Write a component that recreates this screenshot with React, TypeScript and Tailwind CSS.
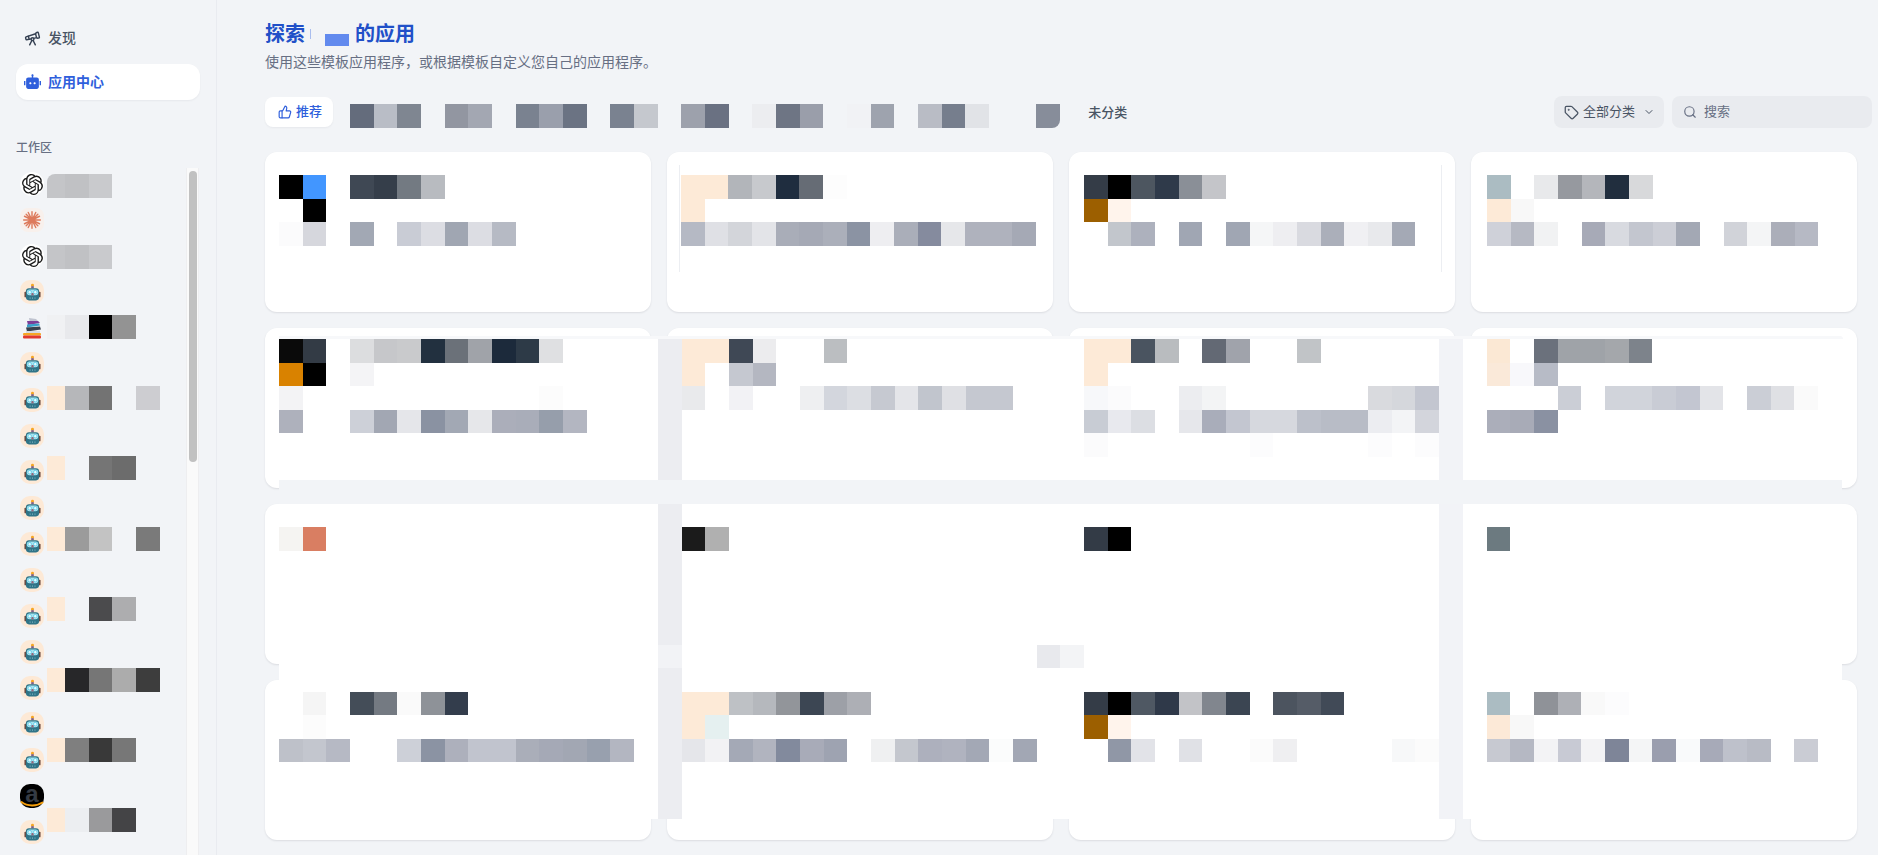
import { ChevronDown, Search, Tag, Telescope, ThumbsUp } from 'lucide-react';
import { RiRobot2Fill } from 'react-icons/ri';
import { SiOpenai } from 'react-icons/si';

const _ = '';
const P = 'bg-[#fdead7]';

// one row of the mosaic that hides names in the screenshot
function Pixels({ cells, className = '' }: { cells: string[]; className?: string }) {
  return (
    <div className={`flex h-[23.5px] shrink-0 ${className}`}>
      {cells.map((c, i) => (
        <div key={i} className={`h-full w-[23.68px] shrink-0 ${c}`} />
      ))}
    </div>
  );
}

function PixelRows({ rows }: { rows: string[][] }) {
  return (
    <>
      {rows.map((r, i) => (
        <Pixels key={i} cells={r} />
      ))}
    </>
  );
}

function RobotIcon() {
  return (
    <span className="flex h-6 w-6 shrink-0 items-center justify-center rounded-[10px] bg-[#fde9d6]">
      <svg width="21" height="21" viewBox="0 0 24 24">
        <circle cx="12" cy="3.6" r="1.7" fill="#f6a623" />
        <rect x="10.5" y="4.8" width="3" height="2.4" fill="#7d5f86" />
        <rect x="2.8" y="11" width="2.4" height="6.5" rx="1" fill="#6d4a3f" />
        <rect x="18.8" y="11" width="2.4" height="6.5" rx="1" fill="#6d4a3f" />
        <rect x="4.5" y="7" width="15" height="14" rx="3.5" fill="#2f7487" />
        <rect x="5.5" y="8.5" width="13" height="6.5" rx="3" fill="#a9e4f0" />
        <circle cx="8.8" cy="11.6" r="2" fill="#e4fafe" stroke="#47c4e4" strokeWidth="0.8" />
        <circle cx="15.2" cy="11.6" r="2" fill="#e4fafe" stroke="#47c4e4" strokeWidth="0.8" />
        <rect x="10.6" y="12.5" width="2.8" height="3" rx="1" fill="#8d6a7e" />
        <path d="M8.8 18.4h.9m1.9 0h.9m1.9 0h.9" stroke="#b9e2ea" strokeWidth="1" />
      </svg>
    </span>
  );
}

function OpenaiIcon() {
  return (
    <span className="flex h-6 w-6 shrink-0 items-center justify-center rounded-full bg-white">
      <SiOpenai size={21} className="text-[#1a1a1a]" />
    </span>
  );
}

function ClaudeIcon() {
  return (
    <span className="flex h-6 w-6 shrink-0 items-center justify-center rounded-lg bg-[#f8f0ec]">
      <svg width="20" height="20" viewBox="0 0 24 24" stroke="#dd7a5c" strokeWidth="1.7" strokeLinecap="round">
        <path d="M12 2v20M2 12h20M5 5l14 14M19 5L5 19M7.5 3l9 18M16.5 3l-9 18M3 7.5l18 9M21 7.5l-18 9" />
      </svg>
    </span>
  );
}

function BooksIcon() {
  return (
    <span className="flex h-6 w-6 shrink-0 items-center justify-center">
      <svg width="20" height="24" viewBox="0 0 20 24">
        <path d="M7 2l7 1 3 3-9 1z" fill="#bfc3cf" />
        <path d="M5 5l11 0 2 2-12 2z" fill="#7b3f98" />
        <path d="M5 8.5l12-1 1 2-13 2z" fill="#3aa0c9" />
        <path d="M4 11.5l14-1 1 3-14 2z" fill="#39424e" />
        <rect x="4" y="15" width="14" height="2" fill="#d7dbe2" />
        <rect x="1" y="17" width="18" height="2.5" rx="1" fill="#f6a623" />
        <rect x="1" y="19.5" width="18" height="3" rx="1" fill="#e0382e" />
      </svg>
    </span>
  );
}

function AmazonIcon() {
  return (
    <span className="relative flex h-6 w-6 shrink-0 items-start justify-center rounded-[10px] bg-black font-['Liberation_Sans',sans-serif] text-[24px] leading-[20px] font-bold text-[#353b44]">
      a
      <svg className="absolute bottom-0 left-0" width="24" height="8" viewBox="0 0 24 8">
        <path d="M1.5 2c6 4.5 15 4.5 21 .5" fill="none" stroke="#f59e0b" strokeWidth="2" strokeLinecap="round" />
      </svg>
    </span>
  );
}

const sideRows: { icon: React.ReactNode; cells?: string[]; shift?: string }[] = [
  { icon: <OpenaiIcon />, cells: ['bg-[#c4c5c8] rounded-tl-lg', 'bg-[#c0c1c4]', 'bg-[#c9cacd]'], shift: 'translate-y-[2px]' },
  { icon: <ClaudeIcon /> },
  { icon: <OpenaiIcon />, cells: ['bg-[#c4c5c8]', 'bg-[#c0c1c4]', 'bg-[#c9cacd]'], shift: 'translate-y-[1px]' },
  { icon: <RobotIcon /> },
  { icon: <BooksIcon />, cells: ['bg-[#f0f1f3]', 'bg-[#e8e9ec]', 'bg-[#000000]', 'bg-[#939393]'], shift: '-translate-y-[1px]' },
  { icon: <RobotIcon /> },
  { icon: <RobotIcon />, cells: [P, 'bg-[#b6b7ba]', 'bg-[#737373]', _, 'bg-[#cdcdd1]'], shift: '-translate-y-[2px]' },
  { icon: <RobotIcon /> },
  { icon: <RobotIcon />, cells: [P, _, 'bg-[#757575]', 'bg-[#6c6c6c]'], shift: '-translate-y-[4px]' },
  { icon: <RobotIcon /> },
  { icon: <RobotIcon />, cells: [P, 'bg-[#9b9b9b]', 'bg-[#c3c3c3]', _, 'bg-[#7a7a7a]'], shift: '-translate-y-[5px]' },
  { icon: <RobotIcon /> },
  { icon: <RobotIcon />, cells: [P, _, 'bg-[#4b4b4d]', 'bg-[#adadaf]'], shift: '-translate-y-[7px]' },
  { icon: <RobotIcon /> },
  { icon: <RobotIcon />, cells: [P, 'bg-[#272729]', 'bg-[#767676]', 'bg-[#acacac]', 'bg-[#3d3d3d]'], shift: '-translate-y-[8px]' },
  { icon: <RobotIcon /> },
  { icon: <RobotIcon />, cells: [P, 'bg-[#7f7f7f]', 'bg-[#393939]', 'bg-[#777777]'], shift: '-translate-y-[10px]' },
  { icon: <AmazonIcon /> },
  { icon: <RobotIcon />, cells: [P, 'bg-[#eceef1]', 'bg-[#9a9a9c]', 'bg-[#444446]'], shift: '-translate-y-[12px]' },
];

function Sidebar() {
  return (
    <aside className="flex h-full w-[217px] shrink-0 flex-col border-r border-[#e9ebf0] pt-5 pl-4">
      <div className="flex h-9 w-[184px] items-center gap-[7px] px-2 text-sm font-medium text-[#495464]">
        <Telescope size={17} className="text-[#354052]" />
        发现
      </div>
      <div className="mt-2 flex h-9 w-[184px] items-center gap-[7px] rounded-xl bg-white px-2 text-sm font-semibold text-[#2f5fdc] shadow-[0_1px_2px_rgba(16,24,40,0.05)]">
        <RiRobot2Fill size={17} className="text-[#2f5fdc]" />
        应用中心
      </div>
      <div className="mt-10 text-xs leading-4 font-medium text-[#676f83]">工作区</div>
      <div className="mt-3 flex min-h-0 flex-1">
        <div className="-mt-[2px] w-[170px] overflow-hidden pl-1">
          {sideRows.map((row, i) => (
            <div key={i} className="flex h-9 shrink-0 items-center gap-[3px]">
              {row.icon}
              {row.cells && (
                <div className={`flex h-[23.5px] ${row.shift}`}>
                  {row.cells.map((c, j) => (
                    <div key={j} className={`h-full ${j === 0 ? 'w-[18px]' : 'w-[23.68px]'} ${c}`} />
                  ))}
                </div>
              )}
            </div>
          ))}
        </div>
        <div className="w-[13px] shrink-0 border-x border-[#eeeef0] bg-[#fafafa] px-[2px] pt-[3px]">
          <div className="h-[291px] w-2 rounded-full bg-[#c1c1c1]" />
        </div>
      </div>
    </aside>
  );
}

function Toolbar() {
  return (
    <div className="mt-6 flex h-8 w-[1607px] items-start">
      <button className="mt-px flex h-[30px] w-[68px] items-center justify-center gap-1 rounded-lg bg-white pl-[2px] text-[13px] font-medium text-[#2f5fdc] shadow-[0_1px_2px_rgba(16,24,40,0.05)]">
        <ThumbsUp size={14} />
        推荐
      </button>
      <Pixels
        className="mt-[8px] ml-[17px]"
        cells={[
          'bg-[#646c7c]', 'bg-[#b9bdc6]', 'bg-[#7f8691]', _,
          'bg-[#9296a1]', 'bg-[#a3a7b2]', _,
          'bg-[#7a8290]', 'bg-[#9a9fac]', 'bg-[#6b7383]', _,
          'bg-[#7a8290]', 'bg-[#c5c8ce]', _,
          'bg-[#9da1ac]', 'bg-[#6a7182]', _,
          'bg-[#ecedf0]', 'bg-[#6e7584]', 'bg-[#9a9eaa]', _,
          'bg-[#f1f2f5]', 'bg-[#9ea3ae]', _,
          'bg-[#b9bcc5]', 'bg-[#767e8d]', 'bg-[#e1e3e7]', _, _,
          'bg-[#878d9a] rounded-br-lg',
        ]}
      />
      <span className="mt-[6px] ml-[28px] text-[13px] leading-5 font-medium text-[#495464]">未分类</span>
      <div className="ml-auto flex gap-2">
        <div className="flex h-8 w-[110px] items-center rounded-lg bg-[#e9ebef] pl-[10px] text-[13px] text-[#495464]">
          <Tag size={15} className="mr-[4px]" />
          全部分类
          <ChevronDown size={12} className="ml-2" />
        </div>
        <div className="flex h-8 w-[200px] items-center rounded-lg bg-[#e9ebef] pl-[11px] text-[13px] text-[#676f83]">
          <Search size={14} className="mr-[7px]" />
          搜索
        </div>
      </div>
    </div>
  );
}

const firstRow: { pad: string; line?: string; rows: string[][] }[] = [
  {
    pad: 'pl-[14px]',
    rows: [
      ['bg-[#000000]', 'bg-[#4296ff]', _, 'bg-[#3f4854]', 'bg-[#353e4a]', 'bg-[#737a82]', 'bg-[#b8bbc0]'],
      [_, 'bg-[#000000]'],
      ['bg-[#fbfbfc]', 'bg-[#d6d7dd]', _, 'bg-[#a2a8b4]', _, 'bg-[#c9ccd5]', 'bg-[#dcdde3]', 'bg-[#a0a6b2]', 'bg-[#dcdde3]', 'bg-[#b6bac4]'],
    ],
  },
  {
    pad: 'pl-[14px]',
    line: 'left-[12px]',
    rows: [
      [P, P, 'bg-[#b2b5ba]', 'bg-[#c7c9cd]', 'bg-[#1f2d3f]', 'bg-[#666c75]', 'bg-[#fdfdfd]'],
      [P],
      ['bg-[#b5b9c4]', 'bg-[#dfe0e5]', 'bg-[#d3d5da]', 'bg-[#e3e4e8]', 'bg-[#a9adb8]', 'bg-[#a5a9b5]', 'bg-[#abafba]', 'bg-[#8b93a3]', 'bg-[#eeeef1]', 'bg-[#aaaeb9]', 'bg-[#858b9e]', 'bg-[#e6e7ea]', 'bg-[#afb2bd]', 'bg-[#afb2bd]', 'bg-[#a5a9b5]'],
    ],
  },
  {
    pad: 'pl-[15px]',
    line: 'right-[13px]',
    rows: [
      ['bg-[#343c47]', 'bg-[#000000]', 'bg-[#4d5660]', 'bg-[#2f3a4a]', 'bg-[#8a8f97]', 'bg-[#c4c5c9]'],
      ['bg-[#9c5f00]', 'bg-[#fff4ec]'],
      [_, 'bg-[#c2c6cc]', 'bg-[#adb1bd]', _, 'bg-[#a0a6b3]', _, 'bg-[#a0a6b3]', 'bg-[#f5f6f7]', 'bg-[#eeeef1]', 'bg-[#d9dae0]', 'bg-[#abafba]', 'bg-[#f0f0f3]', 'bg-[#e8e9ec]', 'bg-[#a4a9b5]'],
    ],
  },
  {
    pad: 'pl-[16px]',
    rows: [
      ['bg-[#abbcc2]', _, 'bg-[#e8e9eb]', 'bg-[#96999f]', 'bg-[#b4b6bb]', 'bg-[#212e3e]', 'bg-[#d8d9db]'],
      [P, 'bg-[#f8f8f8]'],
      ['bg-[#cfd1d9]', 'bg-[#b6b9c3]', 'bg-[#f1f2f3]', _, 'bg-[#a7aab7]', 'bg-[#d8dae0]', 'bg-[#c3c6cf]', 'bg-[#ccced6]', 'bg-[#a3a8b4]', _, 'bg-[#d1d3d9]', 'bg-[#f4f5f6]', 'bg-[#abaeb9]', 'bg-[#b6b9c4]'],
    ],
  },
];

function CardGrid() {
  return (
    <div className="mt-6 grid w-[1592px] grid-cols-4 gap-4">
      {firstRow.map((card, i) => (
        <div key={i} className={`relative h-40 rounded-xl bg-white pt-[23px] shadow-[0_1px_2px_rgba(16,24,40,0.1)] ${card.pad}`}>
          {card.line && <div className={`absolute top-[13px] h-[107px] w-px bg-[#eceef2] ${card.line}`} />}
          <PixelRows rows={card.rows} />
        </div>
      ))}
      {Array.from({ length: 12 }).map((_x, i) => (
        <div key={i} className="h-40 rounded-xl bg-white shadow-[0_1px_2px_rgba(16,24,40,0.1)]" />
      ))}
    </div>
  );
}

// cards of rows 2 to 4 lie under one large pixelated patch
function MosaicPatch() {
  return (
    <div className="absolute top-[336px] left-[279px] w-[1563.9px]">
      <div className="h-[3px] rounded-tr-lg bg-[#f7f8fa]" />
      <div className="grid grid-cols-[378.88px_23.68px_757.76px_23.68px_378.88px] grid-rows-[141px_23.5px_315.5px]">
        <div className="bg-white">
          <PixelRows
            rows={[
              ['bg-[#0a0a0a]', 'bg-[#333b45]', _, 'bg-[#dcdddf]', 'bg-[#c6c7ca]', 'bg-[#c9cacc]', 'bg-[#22303f]', 'bg-[#6b7179]', 'bg-[#a0a3a9]', 'bg-[#1c2a3b]', 'bg-[#2d3a47]', 'bg-[#dfe0e2]'],
              ['bg-[#d98200]', 'bg-[#000000]', _, 'bg-[#f4f4f6]'],
              ['bg-[#f3f3f5]', _, _, _, _, _, _, _, _, _, _, 'bg-[#fcfcfc]'],
              ['bg-[#aeb1bc]', _, _, 'bg-[#cdd0d8]', 'bg-[#a2a7b3]', 'bg-[#e5e6ea]', 'bg-[#8a92a2]', 'bg-[#a2a8b4]', 'bg-[#e6e7ea]', 'bg-[#abaeba]', 'bg-[#a9adb9]', 'bg-[#969eab]', 'bg-[#b3b6c1]'],
            ]}
          />
        </div>
        <div className="bg-[#ecedf1]" />
        <div className="bg-white">
          <PixelRows
            rows={[
              [P, P, 'bg-[#3f4855]', 'bg-[#ececee]', _, _, 'bg-[#bbbec1]', _, _, _, _, _, _, _, _, _, _, P, P, 'bg-[#4a5460]', 'bg-[#b9bcbf]', _, 'bg-[#636974]', 'bg-[#a0a3ab]', _, _, 'bg-[#c1c4c7]'],
              [P, _, 'bg-[#c5c8d0]', 'bg-[#b4b7c1]', _, _, _, _, _, _, _, _, _, _, _, _, _, P],
              ['bg-[#e9eaec]', _, 'bg-[#f2f2f5]', _, _, 'bg-[#eeeff1]', 'bg-[#d3d6dd]', 'bg-[#dcdee3]', 'bg-[#c6c9d1]', 'bg-[#e4e5e9]', 'bg-[#c1c5cd]', 'bg-[#dfe0e4]', 'bg-[#c5c8d0]', 'bg-[#c5c8d0]', _, _, _, 'bg-[#f7f8fa]', 'bg-[#fbfbfc]', _, _, 'bg-[#ecedf0]', 'bg-[#f3f4f5]', _, _, _, _, _, _, 'bg-[#d9dade]', 'bg-[#d5d7dc]', 'bg-[#c3c6d0]'],
              [_, _, _, _, _, _, _, _, _, _, _, _, _, _, _, _, _, 'bg-[#c8ccd4]', 'bg-[#e8e9ee]', 'bg-[#dcdee3]', _, 'bg-[#e6e7eb]', 'bg-[#a9adba]', 'bg-[#c3c6d0]', 'bg-[#d6d8de]', 'bg-[#d6d8de]', 'bg-[#bcc0ca]', 'bg-[#b8bcc6]', 'bg-[#b8bcc6]', 'bg-[#ecedf1]', 'bg-[#f3f4f6]', 'bg-[#d3d5dc]'],
              [_, _, _, _, _, _, _, _, _, _, _, _, _, _, _, _, _, 'bg-[#fbfbfc]', _, _, _, _, _, _, 'bg-[#fcfcfd]', _, _, _, _, 'bg-[#fcfcfd]', _, 'bg-[#fcfcfd]'],
            ]}
          />
        </div>
        <div className="bg-[#f2f3f7]" />
        <div className="bg-white">
          <PixelRows
            rows={[
              [_, 'bg-[#fbe8d4]', _, 'bg-[#6b717c]', 'bg-[#9fa3a8]', 'bg-[#9fa3a8]', 'bg-[#a4a7ab]', 'bg-[#7d838b]'],
              [_, 'bg-[#fae9d9]', 'bg-[#f8f8fb]', 'bg-[#b7bbc6]'],
              [_, _, _, _, 'bg-[#cbced6]', _, 'bg-[#d1d4db]', 'bg-[#d1d4db]', 'bg-[#c9ccd5]', 'bg-[#c3c6d1]', 'bg-[#e3e4e8]', _, 'bg-[#cbced6]', 'bg-[#dfe0e4]', 'bg-[#fafafa]'],
              [_, 'bg-[#abaeba]', 'bg-[#a8abb7]', 'bg-[#8a91a2]'],
            ]}
          />
        </div>
        <div className="col-span-5 bg-[#f2f4f7]" />
        <div className="bg-white">
          <PixelRows
            rows={[
              [],
              ['bg-[#f5f4f2]', 'bg-[#d97e62]'],
              [], [], [], [], [], [],
              [_, 'bg-[#f5f5f5]', _, 'bg-[#444d58]', 'bg-[#747a82]', 'bg-[#fafafa]', 'bg-[#8e9298]', 'bg-[#333d4c]'],
              [_, 'bg-[#fcfcfc]'],
              ['bg-[#bec1c9]', 'bg-[#c3c6ce]', 'bg-[#b6b9c4]', _, _, 'bg-[#cdd0d8]', 'bg-[#8b93a3]', 'bg-[#adb0bc]', 'bg-[#c1c4ce]', 'bg-[#c1c4ce]', 'bg-[#aaaeb9]', 'bg-[#a5a9b6]', 'bg-[#a2a7b3]', 'bg-[#98a0ae]', 'bg-[#b3b6c1]'],
            ]}
          />
        </div>
        <div className="flex flex-col bg-[#ecedf1]">
          <div className="h-[141px]" />
          <div className="h-[23.5px] bg-[#f2f3f6]" />
        </div>
        <div className="bg-white">
          <PixelRows
            rows={[
              [],
              ['bg-[#1b1b1b]', 'bg-[#b0b0b0]', _, _, _, _, _, _, _, _, _, _, _, _, _, _, _, 'bg-[#333b46]', 'bg-[#000000]'],
              [], [], [], [],
              [_, _, _, _, _, _, _, _, _, _, _, _, _, _, _, 'bg-[#e8e9ed]', 'bg-[#f3f4f6]'],
              [],
              [P, P, 'bg-[#bec1c5]', 'bg-[#b5b8bd]', 'bg-[#92959a]', 'bg-[#3c4653]', 'bg-[#9da0a7]', 'bg-[#adafb5]', _, _, _, _, _, _, _, _, _, 'bg-[#343c47]', 'bg-[#000000]', 'bg-[#4f5863]', 'bg-[#2f3949]', 'bg-[#c2c3c7]', 'bg-[#81868e]', 'bg-[#3b4552]', _, 'bg-[#4c545f]', 'bg-[#555c67]', 'bg-[#414a57]'],
              [P, 'bg-[#e5f0f0]', _, _, _, _, _, _, _, _, _, _, _, _, _, _, _, 'bg-[#9c5f00]', 'bg-[#fff4ec]'],
              ['bg-[#e5e6ea]', 'bg-[#f2f2f4]', 'bg-[#a4a9b6]', 'bg-[#b1b4bf]', 'bg-[#828a9d]', 'bg-[#a8abb8]', 'bg-[#9ea3b1]', _, 'bg-[#eff0f1]', 'bg-[#c4c7ce]', 'bg-[#adb0bd]', 'bg-[#b0b3bf]', 'bg-[#a3a8b5]', 'bg-[#fbfcfc]', 'bg-[#a2a7b4]', _, _, _, 'bg-[#9097a6]', 'bg-[#e2e3e8]', _, 'bg-[#e0e1e6]', _, _, 'bg-[#fbfbfb]', 'bg-[#efeff1]', _, _, _, _, 'bg-[#f7f8f9]', 'bg-[#fbfbfb]'],
            ]}
          />
        </div>
        <div className="bg-[#f2f3f7]" />
        <div className="bg-white">
          <PixelRows
            rows={[
              [],
              [_, 'bg-[#6c7a80]'],
              [], [], [], [], [], [],
              [_, 'bg-[#abbcc2]', _, 'bg-[#8f9298]', 'bg-[#aeb0b6]', 'bg-[#f9f9f9]', 'bg-[#fcfcfd]'],
              [_, 'bg-[#fce9d7]', 'bg-[#f8f8f8]'],
              [_, 'bg-[#c7c9d1]', 'bg-[#b5b8c3]', 'bg-[#f3f3f5]', 'bg-[#c8cad4]', 'bg-[#f3f3f5]', 'bg-[#7e8598]', 'bg-[#f4f5f6]', 'bg-[#9a9eae]', 'bg-[#f9fafb]', 'bg-[#a7aab8]', 'bg-[#bec1cb]', 'bg-[#b8bbc5]', _, 'bg-[#caccd4]'],
            ]}
          />
        </div>
      </div>
    </div>
  );
}

export default function App() {
  return (
    <div className="relative flex h-[855px] w-[1878px] overflow-hidden bg-[#f2f4f7] font-['Inter','Noto_Sans_CJK_SC',sans-serif]">
      <Sidebar />
      <main className="min-w-0 flex-1 pt-5 pl-12">
        <h1 className="flex h-7 items-center text-xl leading-7 font-semibold text-[#2150c8]">
          探索
          <span className="ml-[5px] h-[10px] w-px bg-[#a9bdee]" />
          <span className="mt-[12px] ml-[14px] h-3 w-6 bg-[#628aee]" />
          <span className="ml-[6px]">的应用</span>
        </h1>
        <p className="mt-1 text-sm leading-5 text-[#676f83]">使用这些模板应用程序，或根据模板自定义您自己的应用程序。</p>
        <Toolbar />
        <CardGrid />
      </main>
      <MosaicPatch />
    </div>
  );
}
